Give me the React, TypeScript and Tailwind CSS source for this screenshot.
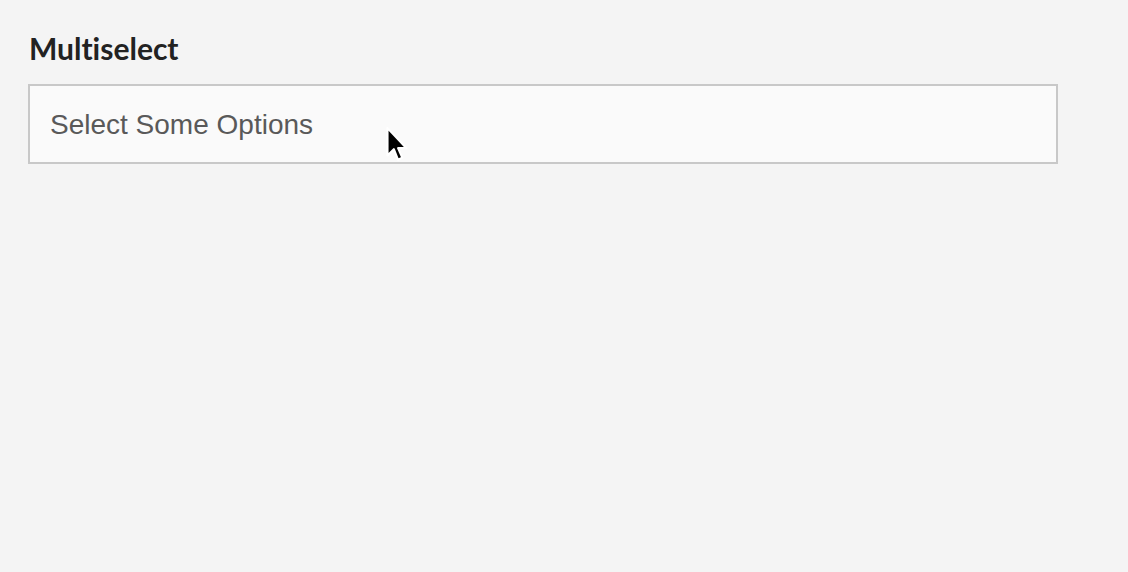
export default function App() {
  return (
    <div className="min-h-[572px] w-full bg-[#f4f4f4] px-7 pt-[30px] relative">
      <h2 className="text-[30px] leading-[36px] font-bold text-[#222] mb-[18px] ml-px [font-variant-ligatures:none]" style={{ fontFamily: 'Lato, sans-serif' }}>
        Multiselect
      </h2>
      <div className="w-[1030px] h-[80px] border-2 border-[#c8c8c8] bg-[#fafafa] flex items-center pl-5 pt-px">
        <span className="text-[28px] text-[#595959]" style={{ fontFamily: '"Liberation Sans", Arial, sans-serif' }}>
          Select Some Options
        </span>
      </div>
      {/* mouse pointer */}
      <svg className="absolute left-[384px] top-[126px]" width="26" height="38" viewBox="0 0 24 36">
        <path d="M3 2 L3 28 L9 22 L13 32 L17 30 L13 21 L21 21 Z" fill="#000" stroke="#fff" strokeWidth="2" strokeLinejoin="round" />
      </svg>
    </div>
  );
}
